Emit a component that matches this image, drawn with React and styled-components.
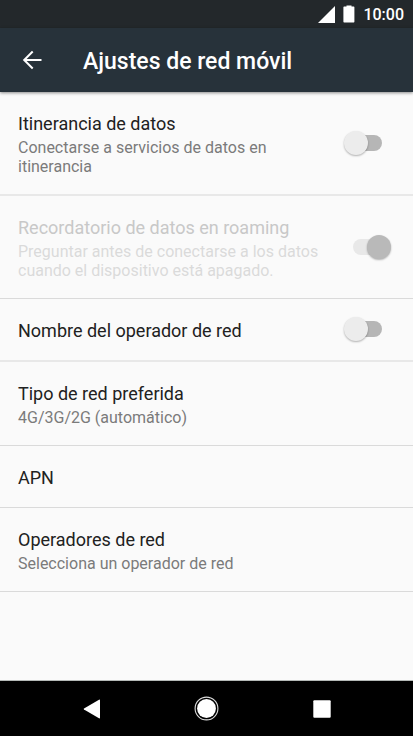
import React, { useState } from "react";
import styled, { createGlobalStyle } from "styled-components";

const GlobalStyle = createGlobalStyle`
  * { box-sizing: border-box; }
  body {
    margin: 0;
    background: #fafafa;
    font-family: Roboto, "Liberation Sans", sans-serif;
  }
`;

const Screen = styled.div`
  display: flex;
  flex-direction: column;
  min-height: 100vh;
`;

const StatusBar = styled.div`
  display: flex;
  align-items: center;
  justify-content: flex-end;
  gap: 8px;
  height: 28px;
  padding: 0 9px;
  background: #23282b;
  color: #fff;
`;

const Clock = styled.time`
  padding-top: 2px;
  font-size: 16px;
  line-height: 20px;
  font-weight: 500;
`;

const AppBar = styled.header`
  display: flex;
  align-items: center;
  gap: 38px;
  height: 64px;
  padding: 0 20px;
  background: #27323a;
  color: #fff;
  box-shadow: 0 1px 3px rgba(0, 0, 0, 0.45);
`;

const IconButton = styled.button`
  display: flex;
  align-items: center;
  justify-content: center;
  padding: 0;
  border: 0;
  background: none;
  color: #fff;
`;

const Title = styled.h1`
  margin: 0;
  padding-top: 4px;
  font-size: 23px;
  line-height: 28px;
  font-weight: 500;
`;

const List = styled.main`
  flex: 1;
`;

const Row = styled.div`
  display: flex;
  align-items: center;
  justify-content: space-between;
  gap: 24px;
  padding: 21px 22px 18px 18px;
  border-bottom: ${(p) => (p.$thick ? "2px solid #e8e8e8" : "1px solid #dadada")};
`;

const ActionRow = styled(Row).attrs({ as: "button", type: "button" })`
  width: 100%;
  border-width: 0 0 1px;
  background: none;
  font-family: inherit;
  text-align: left;
`;

const Texts = styled.span`
  display: flex;
  flex-direction: column;
  gap: 3px;
`;

const Name = styled.span`
  font-size: 18px;
  line-height: 22px;
  color: ${(p) => (p.$disabled ? "#c8c8c8" : "#212121")};
`;

const Summary = styled.span`
  font-size: 16px;
  line-height: 19px;
  color: ${(p) => (p.$disabled ? "#dadada" : "#7b7b7b")};
`;

const Switch = styled.input.attrs({ type: "checkbox", role: "switch" })`
  appearance: none;
  position: relative;
  flex: none;
  width: 47px;
  height: 24px;
  margin: -5px 0 -1px;

  &::before {
    content: "";
    position: absolute;
    inset: 4px 9px;
    border-radius: 8px;
    background: #b6b6b6;
  }

  &::after {
    content: "";
    position: absolute;
    top: 0;
    left: 0;
    width: 24px;
    height: 24px;
    border-radius: 50%;
    background: #ececec;
    box-shadow: 0 1px 2px rgba(0, 0, 0, 0.3);
  }

  &:checked::before { background: #e8e8e8; }
  &:checked::after { left: 23px; background: #b9b9b9; }
`;

const NavBar = styled.nav`
  display: grid;
  grid-template-columns: repeat(3, 1fr);
  height: 56px;
  padding: 0 34px;
  border-top: 1px solid #b4b9b6;
  background: #000;
`;

function SwitchRow({ id, name, summary, initial, disabled, thick }) {
  const [on, setOn] = useState(initial);
  return (
    <Row as="label" htmlFor={id} $thick={thick}>
      <Texts>
        <Name $disabled={disabled}>{name}</Name>
        {summary && <Summary $disabled={disabled}>{summary}</Summary>}
      </Texts>
      <Switch
        id={id}
        checked={on}
        disabled={disabled}
        onChange={(e) => setOn(e.target.checked)}
      />
    </Row>
  );
}

function LinkRow({ name, summary }) {
  return (
    <ActionRow>
      <Texts>
        <Name>{name}</Name>
        {summary && <Summary>{summary}</Summary>}
      </Texts>
    </ActionRow>
  );
}

export default function App() {
  return (
    <Screen>
      <GlobalStyle />
      <StatusBar>
        <svg width="17" height="17" viewBox="0 0 17 17" fill="#fff" aria-hidden="true">
          <path d="M17 0V17H0Z" />
        </svg>
        <svg width="12" height="18" viewBox="0 0 12 18" fill="#fff" aria-hidden="true">
          <path d="M3.5 0.5h5v1h2.2a0.7 0.7 0 0 1 0.7 0.7v14.6a0.7 0.7 0 0 1-0.7 0.7H1.1a0.7 0.7 0 0 1-0.7-0.7V2.2a0.7 0.7 0 0 1 0.7-0.7h2.4z" />
        </svg>
        <Clock>10:00</Clock>
      </StatusBar>
      <AppBar>
        <IconButton type="button" aria-label="Atrás">
          <svg width="25" height="24" viewBox="0 0 25 24" fill="none" stroke="#fff" strokeWidth="2" aria-hidden="true">
            <path d="M12.7 3.5L4.2 12L12.7 20.5M4.2 12H21.5" />
          </svg>
        </IconButton>
        <Title>Ajustes de red móvil</Title>
      </AppBar>
      <List>
        <SwitchRow
          id="roaming"
          name="Itinerancia de datos"
          summary="Conectarse a servicios de datos en itinerancia"
          initial={false}
          thick
        />
        <SwitchRow
          id="reminder"
          name="Recordatorio de datos en roaming"
          summary="Preguntar antes de conectarse a los datos cuando el dispositivo está apagado."
          initial
          disabled
        />
        <SwitchRow id="operator" name="Nombre del operador de red" initial={false} thick />
        <LinkRow name="Tipo de red preferida" summary="4G/3G/2G (automático)" />
        <LinkRow name="APN" />
        <LinkRow name="Operadores de red" summary="Selecciona un operador de red" />
      </List>
      <NavBar>
        <IconButton type="button" aria-label="Atrás">
          <svg width="18" height="20" viewBox="0 0 18 20" fill="#fff" aria-hidden="true">
            <path d="M16 0.7Q17 0.2 17 1.3V18.7Q17 19.8 16 19.3L1 10.6Q0.2 10 1 9.4Z" />
          </svg>
        </IconButton>
        <IconButton type="button" aria-label="Inicio">
          <svg width="25" height="25" viewBox="0 0 25 25" aria-hidden="true">
            <circle cx="12.5" cy="12.5" r="11.4" fill="none" stroke="#ddd" strokeWidth="1.1" />
            <circle cx="12.5" cy="12.5" r="9.4" fill="#fff" />
          </svg>
        </IconButton>
        <IconButton type="button" aria-label="Recientes">
          <svg width="18" height="18" viewBox="0 0 18 18" aria-hidden="true">
            <rect x="0.3" y="0.3" width="17.4" height="17.4" rx="1" fill="#fff" />
          </svg>
        </IconButton>
      </NavBar>
    </Screen>
  );
}
